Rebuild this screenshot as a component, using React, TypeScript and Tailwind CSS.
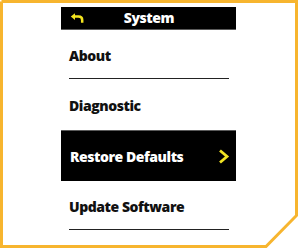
import { ReactNode } from 'react';

const font = { fontFamily: '"Open Sans", "Liberation Sans", sans-serif' };

function Row({ children, active, divider }: { children: ReactNode; active?: boolean; divider?: boolean }) {
  return (
    <div
      className={
        active
          ? 'relative h-[51px] bg-black border-t border-[#5a5a5a] flex items-center pl-[9px] pr-[6px]'
          : 'relative h-[50px] flex items-center pl-[8px]'
      }
    >
      <span
        className={
          active
            ? 'flex-1 text-[14px] font-extrabold text-white tracking-[-0.45px]'
            : 'flex-1 text-[14px] font-extrabold text-[#111] tracking-[-0.45px]'
        }
      >
        {children}
      </span>
      {active && (
        <svg width="12" height="15" viewBox="0 0 12 15">
          <path d="M2 1.5 L9 7.5 L2 13.5" fill="none" stroke="#f1e423" strokeWidth="2.8" strokeLinejoin="miter" />
        </svg>
      )}
      {divider && <div className="absolute left-[8px] right-[7px] bottom-[1px] h-[1.5px] bg-[#222]" />}
    </div>
  );
}

export default function App() {
  return (
    <div className="relative w-[298px] h-[248px] bg-white overflow-hidden" style={font}>
      {/* frame outline */}
      <svg className="absolute inset-0 pointer-events-none" width="298" height="248" viewBox="0 0 298 248">
        <polyline
          points="1.5,1.5 296.5,1.5 296.5,215.5 266,246.5 1.5,246.5 1.5,1.5"
          fill="none"
          stroke="#f7b52f"
          strokeWidth="3"
        />
      </svg>

      <div className="ml-[61px] mt-[7px] w-[175px]">
        <div className="h-[23px] bg-black border-b border-[#5a5a5a] flex items-center relative">
          <svg width="14" height="10" viewBox="0 0 14 10" className="absolute left-[9px] top-[6px]">
            <path d="M5 0.3 L0.8 3.6 L5 6.9 Z" fill="#f3e41f" />
            <path d="M3.5 3.6 H8.5 Q12.2 3.6 12.2 7 V9.7" fill="none" stroke="#f3e41f" strokeWidth="2.5" />
          </svg>
          <span className="flex-1 text-center text-white font-extrabold text-[14px] leading-none pl-[1px] tracking-[-0.45px]">System</span>
        </div>
        <Row divider>About</Row>
        <Row>Diagnostic</Row>
        <Row active>Restore Defaults</Row>
        <Row divider>Update Software</Row>
      </div>
    </div>
  );
}
